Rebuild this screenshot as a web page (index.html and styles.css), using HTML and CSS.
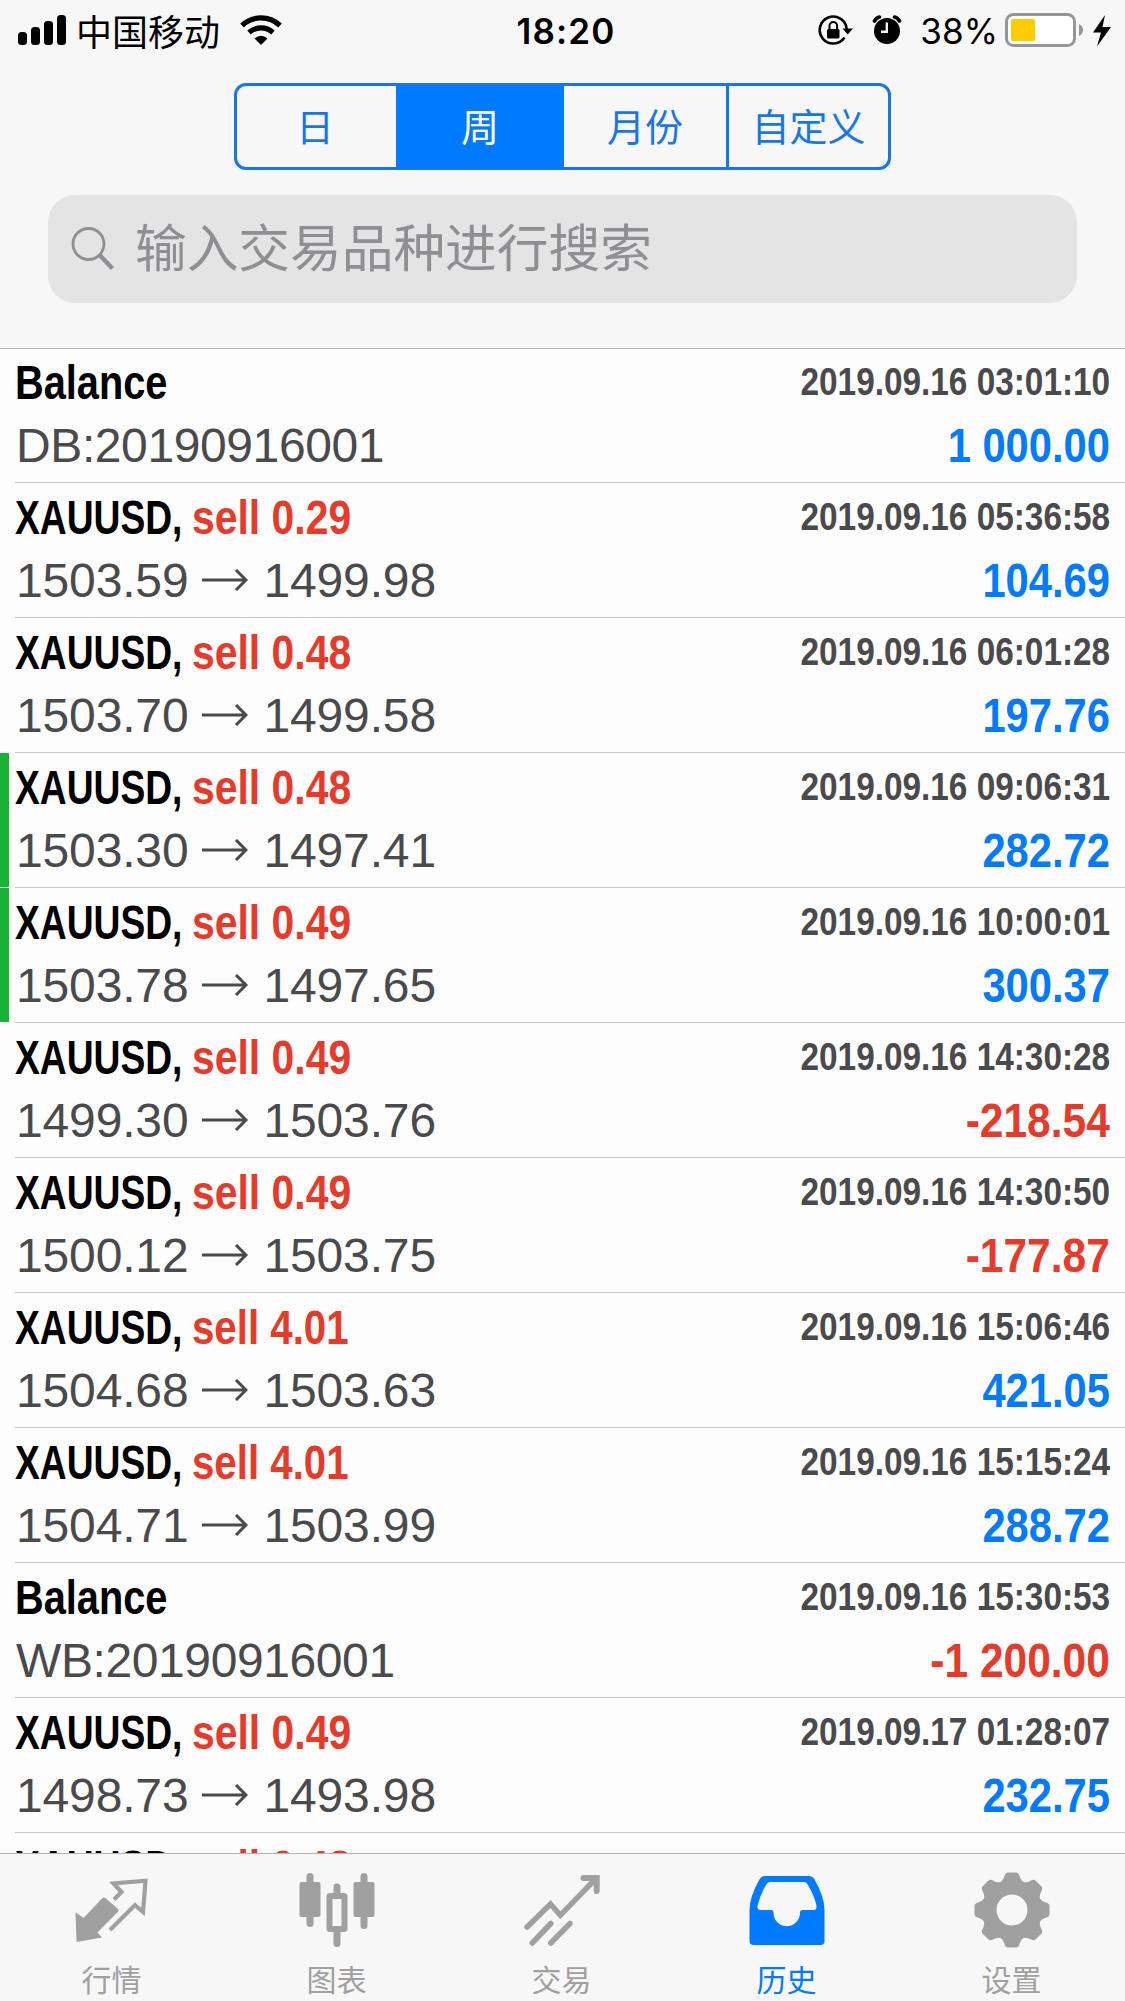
FILE: index.html
```html
<!DOCTYPE html>
<html lang="zh-CN">
<head>
<meta charset="utf-8">
<title>历史</title>
<link rel="stylesheet" href="styles.css">
</head>
<body>
<header class="top">
  <div class="status">
    <div class="status-left">
      <svg class="signal" width="48" height="30" viewBox="0 0 48 30"><rect x="0" y="17" width="9" height="13" rx="3.5"/><rect x="13" y="12" width="9" height="18" rx="3.5"/><rect x="26" y="6" width="9" height="24" rx="3.5"/><rect x="39" y="0" width="9" height="30" rx="3.5"/></svg>
      <span class="carrier">中国移动</span>
      <svg class="wifi" width="42" height="30" viewBox="0 0 42 30"><g fill="none" stroke="#000" stroke-width="5.2"><path d="M2 10.500A27.500 27.500 0 0 1 40 10.500"/><path d="M9 17.500A18 18 0 0 1 33 17.500"/></g><path d="M14.500 23.500Q21 18 27.500 23.500L22 29Q21 30 20 29Z"/></svg>
    </div>
    <div class="clock">18:20</div>
    <div class="status-right">
      <svg class="lock" width="36" height="32" viewBox="0 0 36 32"><path d="M26.500 22.500A13.500 13.500 0 1 1 28.700 14" fill="none" stroke="#000" stroke-width="2.600"/><path d="M24.500 13.500H35L29.700 19.500Z"/><rect x="9" y="14" width="12.500" height="9.500" rx="1.500"/><path d="M11.500 15V10.800a3.800 3.800 0 0 1 7.600 0V15" fill="none" stroke="#000" stroke-width="2"/></svg>
      <svg class="alarm" width="30" height="30" viewBox="0 0 30 30"><circle cx="15" cy="16" r="13"/><path d="M2.500 6Q4.500 2.500 7.500 2M27.500 6Q25.500 2.500 22.500 2" fill="none" stroke="#000" stroke-width="3.600" stroke-linecap="round"/><path d="M14.800 7.500V16.800H9" fill="none" stroke="#f7f7f7" stroke-width="2.400"/></svg>
      <span class="percent">38%</span>
      <svg class="battery" width="78" height="34" viewBox="0 0 78 34"><rect x="1.500" y="1.500" width="68" height="31" rx="7" fill="#fff" stroke="#96969a" stroke-width="3"/><rect x="6" y="6" width="24" height="22" rx="2" fill="#fc0"/><path d="M74 11Q78 13 78 17T74 23Z" fill="#96969a"/></svg>
      <svg class="bolt" width="18" height="32" viewBox="0 0 18 32"><path d="M12 0L0 17.500H8L4 31.500L18 12H9.500Z"/></svg>
    </div>
  </div>
  <nav class="segments">
    <span class="segment">日</span>
    <span class="segment active">周</span>
    <span class="segment">月份</span>
    <span class="segment">自定义</span>
  </nav>
  <div class="search">
    <svg width="46" height="46" viewBox="0 0 46 46" fill="none" stroke="#8e8e93"><circle cx="17.500" cy="18" r="15.500" stroke-width="2.800"/><path d="M28.500 29L41.500 42.500" stroke-width="4.400"/></svg>
    <span>输入交易品种进行搜索</span>
  </div>
</header>

<main class="list">
  <div class="row"><i class="mark"></i><div class="deal"><b class="balance">Balance</b><time>2019.09.16 03:01:10</time><span class="price note">DB:20190916001</span><b class="amount">1 000.00</b></div></div>
  <div class="row"><i class="mark"></i><div class="deal"><b class="title"><span class="symbol">XAUUSD,</span><span class="side">sell 0.29</span></b><time>2019.09.16 05:36:58</time><span class="price">1503.59<svg class="arrow" viewBox="0 0 46 22"><path d="M0 11H44M34 1L44 11L34 21"/></svg>1499.98</span><b class="amount">104.69</b></div></div>
  <div class="row"><i class="mark"></i><div class="deal"><b class="title"><span class="symbol">XAUUSD,</span><span class="side">sell 0.48</span></b><time>2019.09.16 06:01:28</time><span class="price">1503.70<svg class="arrow" viewBox="0 0 46 22"><path d="M0 11H44M34 1L44 11L34 21"/></svg>1499.58</span><b class="amount">197.76</b></div></div>
  <div class="row take-profit"><i class="mark"></i><div class="deal"><b class="title"><span class="symbol">XAUUSD,</span><span class="side">sell 0.48</span></b><time>2019.09.16 09:06:31</time><span class="price">1503.30<svg class="arrow" viewBox="0 0 46 22"><path d="M0 11H44M34 1L44 11L34 21"/></svg>1497.41</span><b class="amount">282.72</b></div></div>
  <div class="row take-profit"><i class="mark"></i><div class="deal"><b class="title"><span class="symbol">XAUUSD,</span><span class="side">sell 0.49</span></b><time>2019.09.16 10:00:01</time><span class="price">1503.78<svg class="arrow" viewBox="0 0 46 22"><path d="M0 11H44M34 1L44 11L34 21"/></svg>1497.65</span><b class="amount">300.37</b></div></div>
  <div class="row"><i class="mark"></i><div class="deal"><b class="title"><span class="symbol">XAUUSD,</span><span class="side">sell 0.49</span></b><time>2019.09.16 14:30:28</time><span class="price">1499.30<svg class="arrow" viewBox="0 0 46 22"><path d="M0 11H44M34 1L44 11L34 21"/></svg>1503.76</span><b class="amount loss">-218.54</b></div></div>
  <div class="row"><i class="mark"></i><div class="deal"><b class="title"><span class="symbol">XAUUSD,</span><span class="side">sell 0.49</span></b><time>2019.09.16 14:30:50</time><span class="price">1500.12<svg class="arrow" viewBox="0 0 46 22"><path d="M0 11H44M34 1L44 11L34 21"/></svg>1503.75</span><b class="amount loss">-177.87</b></div></div>
  <div class="row"><i class="mark"></i><div class="deal"><b class="title"><span class="symbol">XAUUSD,</span><span class="side narrow">sell 4.01</span></b><time>2019.09.16 15:06:46</time><span class="price">1504.68<svg class="arrow" viewBox="0 0 46 22"><path d="M0 11H44M34 1L44 11L34 21"/></svg>1503.63</span><b class="amount">421.05</b></div></div>
  <div class="row"><i class="mark"></i><div class="deal"><b class="title"><span class="symbol">XAUUSD,</span><span class="side narrow">sell 4.01</span></b><time>2019.09.16 15:15:24</time><span class="price">1504.71<svg class="arrow" viewBox="0 0 46 22"><path d="M0 11H44M34 1L44 11L34 21"/></svg>1503.99</span><b class="amount">288.72</b></div></div>
  <div class="row"><i class="mark"></i><div class="deal"><b class="balance">Balance</b><time>2019.09.16 15:30:53</time><span class="price note">WB:20190916001</span><b class="amount loss">-1 200.00</b></div></div>
  <div class="row"><i class="mark"></i><div class="deal"><b class="title"><span class="symbol">XAUUSD,</span><span class="side">sell 0.49</span></b><time>2019.09.17 01:28:07</time><span class="price">1498.73<svg class="arrow" viewBox="0 0 46 22"><path d="M0 11H44M34 1L44 11L34 21"/></svg>1493.98</span><b class="amount">232.75</b></div></div>
  <div class="row"><i class="mark"></i><div class="deal"><b class="title"><span class="symbol">XAUUSD,</span><span class="side">sell 0.48</span></b><time>2019.09.17 02:32:04</time></div></div>
</main>

<footer class="tabs">
  <div class="tab"><svg viewBox="71.500 1870 80 80"><path d="M75 1912.300L83 1918L101.500 1898.500Q103.500 1896.500 105.500 1898.500L117 1908.500Q119 1910.300 117 1912.300L97 1932.500L101.700 1937.500L76 1942Z" fill="currentColor"/><path d="M113.500 1899.500L121 1892L113 1883.500L145 1880.700L142.500 1912L134.500 1905L109.500 1930" fill="none" stroke="currentColor" stroke-width="4.200"/></svg><span>行情</span></div>
  <div class="tab"><svg viewBox="296.500 1870 80 80" fill="currentColor"><rect x="299" y="1882" width="21" height="35" rx="2"/><rect x="306" y="1873" width="7" height="54" rx="3.500"/><rect x="353" y="1882" width="21" height="35" rx="2"/><rect x="360" y="1873" width="7" height="56" rx="3.500"/><path d="M333 1894V1887a3.500 3.500 0 0 1 7 0V1894ZM333 1931V1943.500a3.500 3.500 0 0 0 7 0V1931Z"/><rect x="329" y="1896" width="15" height="33" rx=".5" fill="none" stroke="currentColor" stroke-width="6"/></svg><span>图表</span></div>
  <div class="tab"><svg viewBox="521.500 1870 80 80" fill="none" stroke="currentColor" stroke-width="5.500"><path d="M526.600 1927L550 1904L559.800 1915.300L595 1879M531.800 1943L550.300 1923.500M550.300 1943L569.500 1923.500" stroke-linecap="round"/><path d="M583 1878H596.200V1891" stroke-width="6" stroke-linecap="round" stroke-linejoin="miter"/></svg><span>交易</span></div>
  <div class="tab current"><svg viewBox="746.500 1870 80 80"><path d="M765 1876H808Q812 1876 813.800 1879Q824 1897 824 1910V1941Q824 1945 820 1945H753Q749 1945 749 1941V1910Q749 1897 759.200 1879Q761 1876 765 1876Z" fill="currentColor"/><path d="M770 1882H803Q806 1882 807.500 1885Q814 1896 816 1906Q816.500 1910 813 1910H802Q799.500 1910 799.500 1913A13.200 13.200 0 0 1 773 1913Q773 1910 770.500 1910H760Q756.500 1910 757 1906Q759 1896 765.500 1885Q767 1882 770 1882Z" fill="#f7f7f7"/></svg><span>历史</span></div>
  <div class="tab"><svg viewBox="-40 -40 80 80" fill="currentColor"><defs><path id="tooth" d="M-13 -27Q-9 -29 -7.500 -34Q-6.500 -37.500 -4 -37.500H4Q6.500 -37.500 7.500 -34Q9 -29 13 -27L0 -20Z"/></defs><circle r="22.500" fill="none" stroke="currentColor" stroke-width="14"/><use href="#tooth"/><use href="#tooth" transform="rotate(45)"/><use href="#tooth" transform="rotate(90)"/><use href="#tooth" transform="rotate(135)"/><use href="#tooth" transform="rotate(180)"/><use href="#tooth" transform="rotate(225)"/><use href="#tooth" transform="rotate(270)"/><use href="#tooth" transform="rotate(315)"/></svg><span>设置</span></div>
</footer>
</body>
</html>
```
FILE: styles.css
```css
* { box-sizing: border-box; }
body {
  margin: 0;
  height: 2001px;
  display: flex;
  flex-direction: column;
  overflow: hidden;
  background: #fdfdfd;
  font-family: "Liberation Sans", "Noto Sans CJK SC", sans-serif;
}
svg { display: block; flex: none; }

/* header */
.top {
  position: relative;
  flex: none;
  height: 348px;
  background: #f7f7f7;
  box-shadow: 0 1px 0 #b2b2b4;
}
.status {
  height: 83px;
  display: grid;
  grid-template-columns: 1fr auto 1fr;
  align-items: start;
  padding: 0 14px 0 18px;
}
.status-left, .status-right { display: flex; align-items: flex-start; height: 60px; }
.status-right { justify-content: flex-end; }
.signal, .wifi, .lock, .alarm, .bolt { margin-top: 15px; }
.carrier {
  margin-left: 10px;
  width: 146px;
  font: 400 36px/60px "Noto Sans CJK SC", sans-serif;
}
.wifi { margin-left: 18px; }
.clock {
  padding-left: 3px;
  font: 600 35px/63px Inter, sans-serif;
  letter-spacing: 1.1px;
}
.percent { margin: 0 7px 0 18px; font: 400 35px/63px Inter, sans-serif; }
.alarm { margin-left: 18px; }
.battery { margin-top: 13px; }
.bolt { margin-left: 10px; }

.segments {
  width: 657px;
  height: 87px;
  margin: 0 auto;
  display: grid;
  grid-template-columns: 159px 168px 162px 1fr;
  border: 3px solid #1877e6;
  border-radius: 12px;
  overflow: hidden;
}
.segment {
  color: #1877e6;
  text-align: center;
  font: 400 38px/77px "Noto Sans CJK SC", sans-serif;
}
.segment:first-child { padding-right: 3px; }
.segment:last-child { border-left: 3px solid #1877e6; }
.segment.active { background: #007aff; color: #fff; }

.search {
  margin: 25px 48px 0;
  height: 108px;
  border-radius: 27px;
  background: #e4e4e5;
  display: flex;
  align-items: center;
  gap: 18px;
  padding-left: 23px;
  color: #8e8e93;
  font: 400 51.700px/100px "Noto Sans CJK SC", sans-serif;
}
.search span { padding-bottom: 8px; }

/* deals */
.list { flex: 1; min-height: 0; overflow: hidden; }
.row { display: flex; height: 135px; }
.mark { width: 9px; height: 134px; margin-right: 6px; }
.take-profit .mark { background: #18b336; }
.deal {
  flex: 1;
  display: grid;
  grid-template-columns: 1fr auto;
  grid-template-rows: 63px 68px;
  border-bottom: 1px solid #c8c7cc;
  padding: 1px 15px 0 0;
  white-space: nowrap;
  font-size: 48px;
  line-height: 68px;
}
.title { display: flex; }
.symbol, .side, .balance { transform-origin: 0 50%; }
.symbol { width: 177px; transform: scaleX(.775); }
.side { color: #e63b2b; transform: scaleX(.852); }
.side.narrow { transform: scaleX(.838); }
.balance { justify-self: start; transform: scaleX(.828); }
time {
  justify-self: end;
  font-size: 39px;
  font-weight: 700;
  line-height: 65px;
  color: #4a4a4c;
  transform: scaleX(.855);
  transform-origin: 100% 50%;
}
.price { display: flex; padding-left: 1px; color: #4a4a4c; letter-spacing: -.15px; }
.price.note { letter-spacing: -.4px; }
.arrow {
  width: 46px;
  height: 22px;
  margin: 22px 15px 0 14px;
  fill: none;
  stroke: #4a4a4c;
  stroke-width: 3;
}
.amount {
  justify-self: end;
  color: #007aff;
  transform: scaleX(.868);
  transform-origin: 100% 50%;
}
.amount.loss { color: #e63b2b; transform: scaleX(.885); }

/* tab bar */
.tabs {
  flex: none;
  height: 148px;
  display: grid;
  grid-template-columns: repeat(5, 1fr);
  background: #f7f7f7;
  border-top: 1px solid #b2b2b4;
}
.tab {
  display: flex;
  flex-direction: column;
  align-items: center;
  padding: 16px 2px 0 0;
  color: #a0a0a0;
  font: 400 30px/44px "Noto Sans CJK SC", sans-serif;
}
.tab svg { width: 80px; height: 80px; margin-bottom: 6px; }
.tab.current { color: #007aff; }
```
